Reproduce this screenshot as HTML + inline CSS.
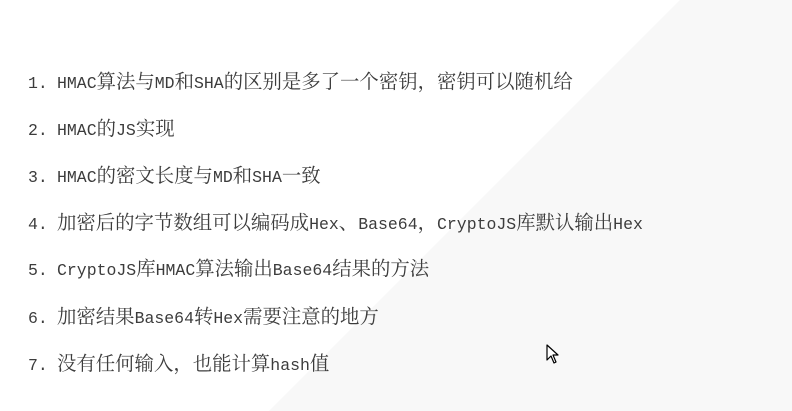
<!DOCTYPE html>
<html><head><meta charset="utf-8"><style>
html,body{margin:0;padding:0;width:792px;height:411px;overflow:hidden;background:#fff;}
.bg{position:absolute;left:0;top:0;}
.l{position:absolute;left:28px;height:22px;line-height:22px;font-family:"Noto Serif CJK SC","WenQuanYi Zen Hei",serif;font-size:19.4px;color:#3c3c3c;white-space:nowrap;}
.n{display:inline-block;width:29px;font-family:"Liberation Mono",monospace;font-size:16.5px;}
.m{font-family:"Liberation Mono",monospace;font-size:16.5px;}
</style></head><body>
<svg class="bg" width="792" height="411"><polygon points="680,0 792,0 792,411 269,411" fill="#f8f8f8"/></svg>
<div class="l" style="top:69px"><span class="n">1.</span><span class="m">HMAC</span>算法与<span class="m">MD</span>和<span class="m">SHA</span>的区别是多了一个密钥，密钥可以随机给</div>
<div class="l" style="top:116px"><span class="n">2.</span><span class="m">HMAC</span>的<span class="m">JS</span>实现</div>
<div class="l" style="top:163px"><span class="n">3.</span><span class="m">HMAC</span>的密文长度与<span class="m">MD</span>和<span class="m">SHA</span>一致</div>
<div class="l" style="top:210px"><span class="n">4.</span>加密后的字节数组可以编码成<span class="m">Hex</span>、<span class="m">Base64</span>，<span class="m">CryptoJS</span>库默认输出<span class="m">Hex</span></div>
<div class="l" style="top:256px"><span class="n">5.</span><span class="m">CryptoJS</span>库<span class="m">HMAC</span>算法输出<span class="m">Base64</span>结果的方法</div>
<div class="l" style="top:304px"><span class="n">6.</span>加密结果<span class="m">Base64</span>转<span class="m">Hex</span>需要注意的地方</div>
<div class="l" style="top:351px"><span class="n">7.</span>没有任何输入，也能计算<span class="m">hash</span>值</div>
<svg style="position:absolute;left:546px;top:344px" width="14" height="22"><path d="M1 1 L1 16 L5 12 L8 19 L10 18 L7 11 L12 11 Z" fill="#fff" stroke="#000" stroke-width="1.2" stroke-linejoin="round"/></svg>
</body></html>
